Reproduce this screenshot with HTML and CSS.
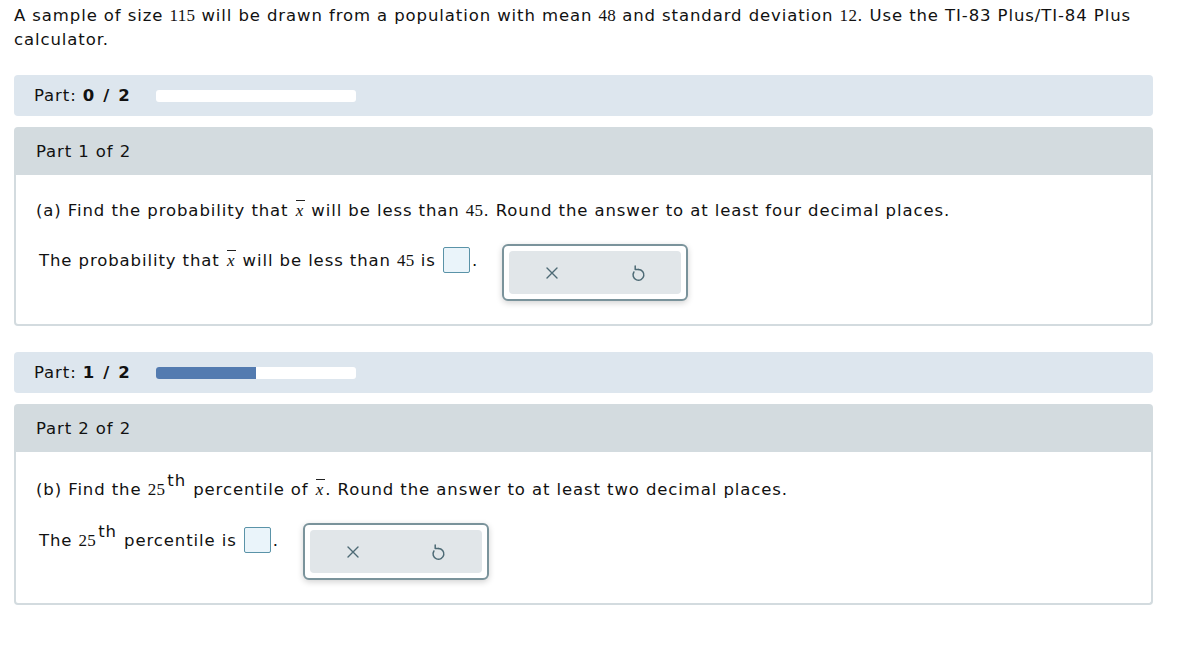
FILE: index.html
```html
<!DOCTYPE html>
<html>
<head>
<meta charset="utf-8">
<link rel="stylesheet" href="styles.css">
</head>
<body>
<p class="intro"><span>A sample of size </span><span class="num">115</span><span> will be drawn from a population with mean </span><span class="num">48</span><span> and standard deviation </span><span class="num">12</span><span>. Use the TI-83 Plus/TI-84 Plus </span><span>calculator.</span></p>

<div class="progress">
  <span class="plabel">Part: <b>0 / 2</b></span>
  <span class="pbar"><span class="pfill" style="width:0%"></span></span>
</div>

<section class="card">
  <div class="card-head">Part 1 of 2</div>
  <div class="card-body">
    <p class="q">(a) Find the probability that <span class="xbar">x</span> will be less than <span class="num">45</span>. Round the answer to at least four decimal places.</p>
    <div class="answer-row">
      <p class="ans">The probability that <span class="xbar">x</span> will be less than <span class="num">45</span> is <span class="box"></span>.</p>
      <div class="tools">
        <div class="tools-inner">
          <span class="tool"><svg width="14" height="14" viewBox="0 0 14 14"><path d="M2 2 L12 12 M12 2 L2 12" stroke="#4d6a75" stroke-width="1.4" fill="none" stroke-linecap="round"/></svg></span>
          <span class="tool"><svg width="15" height="18" viewBox="0 0 15 18"><path d="M7.5 5.5 A5.4 5.4 0 1 1 2.9 8" stroke="#4d6a75" stroke-width="1.5" fill="none" stroke-linecap="round"/><path d="M4.2 2 L4.2 5.5 L7.5 5.5" stroke="#4d6a75" stroke-width="1.5" fill="none" stroke-linecap="round" stroke-linejoin="round"/></svg></span>
        </div>
      </div>
    </div>
  </div>
</section>

<div class="progress">
  <span class="plabel">Part: <b>1 / 2</b></span>
  <span class="pbar"><span class="pfill" style="width:50%"></span></span>
</div>

<section class="card card-b">
  <div class="card-head">Part 2 of 2</div>
  <div class="card-body">
    <p class="q">(b) Find the <span class="num">25</span><span class="sup">th</span> percentile of <span class="xbar">x</span>. Round the answer to at least two decimal places.</p>
    <div class="answer-row">
      <p class="ans">The <span class="num">25</span><span class="sup">th</span> percentile is <span class="box"></span>.</p>
      <div class="tools">
        <div class="tools-inner">
          <span class="tool"><svg width="14" height="14" viewBox="0 0 14 14"><path d="M2 2 L12 12 M12 2 L2 12" stroke="#4d6a75" stroke-width="1.4" fill="none" stroke-linecap="round"/></svg></span>
          <span class="tool"><svg width="15" height="18" viewBox="0 0 15 18"><path d="M7.5 5.5 A5.4 5.4 0 1 1 2.9 8" stroke="#4d6a75" stroke-width="1.5" fill="none" stroke-linecap="round"/><path d="M4.2 2 L4.2 5.5 L7.5 5.5" stroke="#4d6a75" stroke-width="1.5" fill="none" stroke-linecap="round" stroke-linejoin="round"/></svg></span>
        </div>
      </div>
    </div>
  </div>
</section>
</body>
</html>
```
FILE: styles.css
```css
* { box-sizing: border-box; }
html, body { background: #fff; }
body {
  margin: 0;
  padding: 4px 29px 0 14px;
  font-family: "DejaVu Sans", Verdana, sans-serif;
  font-size: 16.5px;
  letter-spacing: 0.9px;
  color: #111;
}
p { margin: 0; }
.intro { line-height: 24px; }
.num {
  font-family: "Liberation Serif", "Times New Roman", serif;
  font-size: 17px;
  letter-spacing: 0.3px;
}
.xbar {
  font-family: "Liberation Serif", "Times New Roman", serif;
  font-style: italic;
  font-size: 17px;
  letter-spacing: 0;
  display: inline-block;
  position: relative;
  padding: 0 2px 0 1px;
}
.xbar::before {
  content: "";
  position: absolute;
  left: 1px;
  right: 0;
  top: 1px;
  border-top: 1px solid #222;
}
.sup {
  font-size: 16.5px;
  position: relative;
  top: -9px;
  line-height: 0;
  margin-left: 2px;
  margin-right: 1px;
}
.progress {
  margin-top: 23px;
  height: 41px;
  background: #dde6ee;
  border-radius: 4px;
  display: flex;
  align-items: center;
  padding-left: 20px;
  gap: 25px;
}
.plabel b { font-weight: bold; letter-spacing: 1.6px; }
.pbar {
  width: 200px;
  height: 12px;
  background: #fff;
  border-radius: 3px;
  overflow: hidden;
  display: flex;
}
.pfill { background: #537bb0; height: 100%; }
.card { margin-top: 11px; }
.card + .progress { margin-top: 26px; }
.card-head {
  height: 48px;
  background: #d3dbdf;
  border-radius: 4px 4px 0 0;
  display: flex;
  align-items: center;
  padding-left: 22px;
}
.card-body {
  border: 2px solid #d3dbdf;
  border-top: none;
  border-radius: 0 0 4px 4px;
  padding: 24px 20px 23px 20px;
}
.card-b .card-body { padding-top: 26px; }
.q { line-height: 24px; }
.answer-row {
  margin-top: 21px;
  display: flex;
  align-items: flex-start;
  padding-left: 3px;
}
.ans { line-height: 24px; margin-top: 4px; }
.card-b .ans { margin-top: 5px; }
.box {
  display: inline-block;
  width: 27px;
  height: 26px;
  border: 1px solid #5a93a8;
  background: #eaf4fa;
  border-radius: 2px;
  vertical-align: middle;
  margin-left: 1px;
  margin-right: 2px;
  position: relative;
  top: -1px;
}
.tools {
  margin-left: 24px;
  width: 186px;
  height: 57px;
  border: 2px solid #7a939b;
  border-radius: 6px;
  padding: 5px;
  background: #fff;
  box-shadow: 0 2px 6px rgba(0, 0, 0, 0.18);
}
.tools-inner {
  height: 100%;
  background: #e1e6e9;
  border-radius: 4px;
  display: flex;
}
.tool {
  flex: 1;
  display: flex;
  align-items: center;
  justify-content: center;
}
```
